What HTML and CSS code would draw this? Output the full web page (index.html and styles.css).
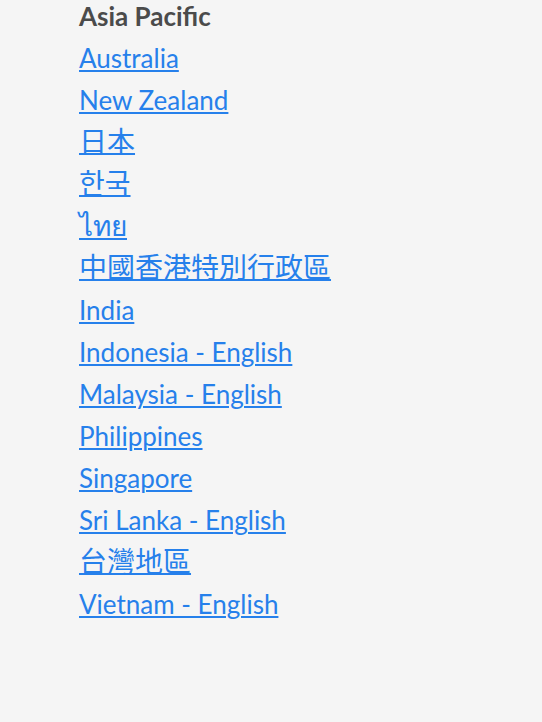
FILE: index.html
```html
<!DOCTYPE html>
<html lang="en">
<head>
<meta charset="utf-8">
<link rel="stylesheet" href="styles.css">
</head>
<body>
<section class="region">
  <h2 class="region-title">Asia Pacific</h2>
  <ul class="region-list">
    <li><a href="#">Australia</a></li>
    <li><a href="#">New Zealand</a></li>
    <li><a href="#" lang="ja" class="cjk ja">日本</a></li>
    <li><a href="#" lang="ko" class="cjk ko">한국</a></li>
    <li><a href="#" lang="th" class="th">ไทย</a></li>
    <li><a href="#" lang="zh-HK" class="cjk tc">中國香港特別行政區</a></li>
    <li><a href="#">India</a></li>
    <li><a href="#">Indonesia - English</a></li>
    <li><a href="#">Malaysia - English</a></li>
    <li><a href="#">Philippines</a></li>
    <li><a href="#">Singapore</a></li>
    <li><a href="#">Sri Lanka - English</a></li>
    <li><a href="#" lang="zh-TW" class="cjk tc">台灣地區</a></li>
    <li><a href="#">Vietnam - English</a></li>
  </ul>
</section>
</body>
</html>
```
FILE: styles.css
```css
html, body {
  margin: 0;
  padding: 0;
  background: #f5f5f5;
}
body {
  font-family: "Lato", "Noto Sans", sans-serif;
  width: 542px;
  height: 722px;
  overflow: hidden;
}
.region {
  padding-left: 79px;
}
.region-title {
  margin: 0 0 5px;
  font-size: 26px;
  line-height: 32px;
  font-weight: 700;
  color: #4b4b4b;
}
.region-list {
  list-style: none;
  margin: 0;
  padding: 0;
}
.region-list li {
  height: 42px;
  line-height: 42px;
  font-size: 26px;
}
.region-list a {
  color: #2680eb;
  text-decoration: underline;
  text-decoration-thickness: 2px;
  text-underline-offset: 2px;
}
.cjk {
  font-size: 28px;
  line-height: 1;
}
.region-list .cjk { text-underline-offset: 1px; }
.th { font-size: 28px; line-height: 1; }
.ja { font-family: "Noto Sans CJK JP", sans-serif; }
.ko { font-family: "Noto Sans CJK KR", sans-serif; }
.tc { font-family: "Noto Sans CJK TC", sans-serif; }
```
